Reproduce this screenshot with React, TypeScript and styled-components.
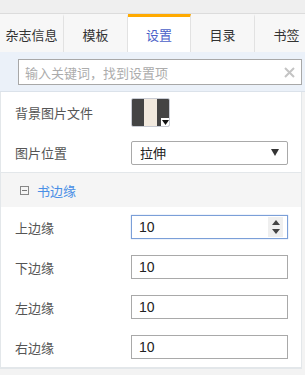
import React, { useState } from "react";
import styled, { createGlobalStyle } from "styled-components";

const GlobalStyle = createGlobalStyle`
  body {
    margin: 0;
    background: #f3f3f3;
    font-family: "Noto Sans CJK SC", "Liberation Sans", sans-serif;
  }
`;

type Tab = { label: string; width: number };

const tabs: Tab[] = [
  { label: "杂志信息", width: 64 },
  { label: "模板", width: 64 },
  { label: "设置", width: 63 },
  { label: "目录", width: 64 },
  { label: "书签", width: 64 },
];

const margins = ["上边缘", "下边缘", "左边缘", "右边缘"];

function App() {
  const [active, setActive] = useState<string>("设置");
  return (
    <>
      <GlobalStyle />
      <Page>
        <TopBand />
        <TabBar>
          {tabs.map((t) => (
            <TabItem
              key={t.label}
              $active={t.label === active}
              $w={t.width}
              onClick={() => setActive(t.label)}
            >
              {t.label}
            </TabItem>
          ))}
        </TabBar>
        <SearchBox>
          <SearchInput>
            <span>输入关键词，找到设置项</span>
            <ClearBtn>
              <svg width="11" height="11" viewBox="0 0 11 11">
                <path d="M1 1L10 10M10 1L1 10" stroke="#c4c4c4" strokeWidth="2" />
              </svg>
            </ClearBtn>
          </SearchInput>
        </SearchBox>
        <Panel>
          <Row $h={41}>
            <Label>背景图片文件</Label>
            <Swatch>
              <SwatchStripe $color="#444444" />
              <SwatchStripe $color="#f1e9de" />
              <SwatchStripe $color="#444444" />
              <SwatchArrow>
                <svg width="7" height="5" viewBox="0 0 7 5">
                  <path d="M0 0H7L3.5 5Z" fill="#111" />
                </svg>
              </SwatchArrow>
            </Swatch>
          </Row>
          <Row $h={39}>
            <Label>图片位置</Label>
            <SelectBox>
              <span>拉伸</span>
              <svg width="8" height="7" viewBox="0 0 8 7">
                <path d="M0 0H8L4 7Z" fill="#333" />
              </svg>
            </SelectBox>
          </Row>
          <SectionHead>
            <MinusBox />
            <SectionTitle>书边缘</SectionTitle>
          </SectionHead>
          {margins.map((m, i) => (
            <Row key={m} $h={40}>
              <Label>{m}</Label>
              <NumberBox $focus={i === 0}>
                <span>10</span>
                {i === 0 ? (
                  <Spinner>
                    <svg width="8" height="14" viewBox="0 0 8 14">
                      <path d="M0 5H8L4 0Z M0 9H8L4 14Z" fill="#444" />
                    </svg>
                  </Spinner>
                ) : null}
              </NumberBox>
            </Row>
          ))}
        </Panel>
      </Page>
    </>
  );
}

const Page = styled.div`
  width: 305px;
  height: 375px;
  overflow: hidden;
  background: #f3f3f3;
`;

const TopBand = styled.div`
  height: 13px;
  background: #efefef;
  border-bottom: 1px solid #dcdcdc;
`;

const TabBar = styled.div`
  display: flex;
  height: 38px;
  background: #f7f7f7;
  white-space: nowrap;
  overflow: hidden;
`;

const TabItem = styled.div<{ $active: boolean; $w: number }>`
  flex: none;
  width: ${(p) => p.$w}px;
  box-sizing: border-box;
  display: flex;
  align-items: center;
  justify-content: center;
  height: 38px;
  padding-bottom: 1px;
  border-right: 1px solid #e2e2e2;
  border-top: 3px solid ${(p) => (p.$active ? "#ffaa00" : "transparent")};
  background: ${(p) => (p.$active ? "#ffffff" : "#f7f7f7")};
  color: ${(p) => (p.$active ? "#4b5fc8" : "#333333")};
  font-size: 13px;
  cursor: pointer;
`;

const SearchBox = styled.div`
  height: 40px;
  box-sizing: border-box;
  padding: 7px 3px 7px 18px;
  background: #ebf1f9;
  border-bottom: 1px solid #dbe2ea;
`;

const SearchInput = styled.div`
  height: 26px;
  box-sizing: border-box;
  border: 1px solid #a8a8a8;
  background: #fff;
  display: flex;
  align-items: center;
  justify-content: space-between;
  padding: 0 6px 0 6px;
  color: #acacac;
  font-size: 13px;
`;

const ClearBtn = styled.span`
  display: flex;
  align-items: center;
`;

const Panel = styled.div`
  width: 302px;
  box-sizing: border-box;
  background: #fff;
  border-left: 1px solid #e3e7ea;
  border-right: 1px solid #e3e7ea;
  border-bottom: 2px solid #e3e7ea;
`;

const Row = styled.div<{ $h: number }>`
  display: flex;
  align-items: center;
  height: ${(p) => p.$h}px;
`;

const Label = styled.div`
  flex: none;
  width: 130px;
  padding-left: 14px;
  box-sizing: border-box;
  color: #555;
  font-size: 13px;
`;

const Swatch = styled.div`
  position: relative;
  display: flex;
  width: 39px;
  height: 29px;
  border: 1px solid #c9ccd4;
  border-radius: 2px;
  box-sizing: border-box;
  overflow: hidden;
`;

const SwatchStripe = styled.div<{ $color: string }>`
  flex: 1;
  background: ${(p) => p.$color};
`;

const SwatchArrow = styled.div`
  position: absolute;
  right: 0;
  bottom: 0;
  width: 8px;
  height: 8px;
  background: #fff;
  display: flex;
  align-items: center;
  justify-content: center;
`;

const SelectBox = styled.div`
  width: 157px;
  height: 24px;
  box-sizing: border-box;
  border: 1px solid #a9a9a9;
  border-radius: 2px;
  display: flex;
  align-items: center;
  justify-content: space-between;
  padding: 0 8px 0 8px;
  font-size: 13px;
  color: #222;
`;

const SectionHead = styled.div`
  height: 35px;
  box-sizing: border-box;
  border-top: 1px solid #e3e7ea;
  background: #f5f5f5;
  display: flex;
  align-items: center;
  padding-left: 19px;
  gap: 8px;
`;

const MinusBox = styled.div`
  width: 9px;
  height: 9px;
  box-sizing: border-box;
  border: 1px solid #888;
  display: flex;
  align-items: center;
  justify-content: center;
  &::after {
    content: "";
    width: 5px;
    height: 1px;
    background: #777;
  }
`;

const SectionTitle = styled.span`
  color: #4a8fe6;
  font-size: 13px;
`;

const NumberBox = styled.div<{ $focus: boolean }>`
  width: 157px;
  height: 24px;
  box-sizing: border-box;
  border: 1px solid ${(p) => (p.$focus ? "#7b9fd8" : "#a9a9a9")};
  box-shadow: ${(p) => (p.$focus ? "0 0 1px #9bb8e8" : "none")};
  display: flex;
  align-items: center;
  justify-content: space-between;
  padding: 0 4px 0 7px;
  font-family: "Liberation Sans", Arial, sans-serif;
  font-size: 14px;
  color: #222;
`;

const Spinner = styled.span`
  width: 15px;
  height: 20px;
  background: #efefef;
  display: flex;
  align-items: center;
  justify-content: center;
`;

export default App;
